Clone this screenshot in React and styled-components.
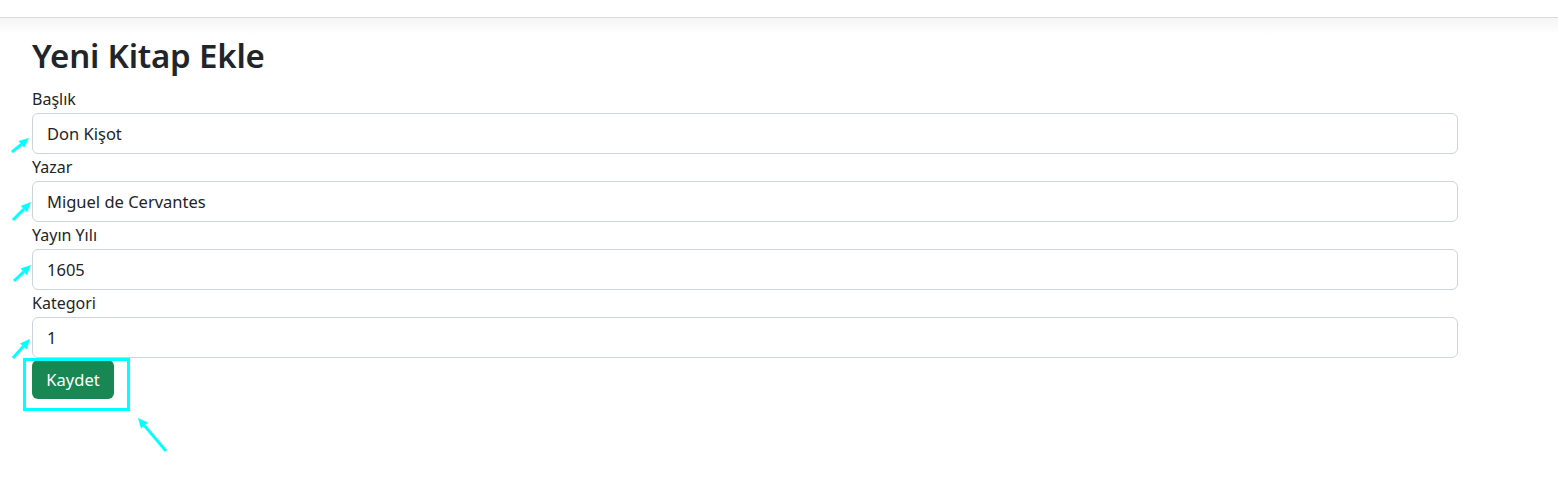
import React from "react";
import styled, { createGlobalStyle } from "styled-components";

const GlobalStyle = createGlobalStyle`
    body {
        margin: 0;
        background: #fff;
        color: #212529;
        font-family: "Noto Sans", "Open Sans", sans-serif;
    }
`;

const Page = styled.div`
    position: relative;
    width: 1558px;
    height: 495px;
    overflow: hidden;
`;

const TopBar = styled.div`
    height: 17px;
    border-bottom: 1px solid #dcdcdc;
    background: #fff;
`;

const Shade = styled.div`
    height: 16px;
    background: linear-gradient(#f5f5f5, #fff);
`;

const Main = styled.main`
    padding: 0 100px 0 32px;
`;

const Title = styled.h2`
    margin: 0 0 9px;
    padding-top: 1px;
    font-size: 33px;
    line-height: 42px;
    font-weight: 600;
    letter-spacing: -0.2px;
`;

const Form = styled.form`
    display: flex;
    flex-direction: column;
    align-items: flex-start;
`;

const Field = styled.div`
    width: 100%;
`;

const Label = styled.label`
    display: block;
    font-size: 16px;
    line-height: 27px;
`;

const Input = styled.input`
    box-sizing: border-box;
    display: block;
    width: 100%;
    height: 41px;
    padding: 0 14px;
    border: 1px solid #ced4da;
    border-radius: 6px;
    font-family: inherit;
    font-size: 16.5px;
    color: #212529;
    background: #fff;
    outline: none;
`;

const Button = styled.button`
    margin-top: 2px;
    width: 82px;
    height: 39px;
    border: none;
    border-radius: 6px;
    background: #198754;
    color: #fff;
    font-family: inherit;
    font-size: 16.5px;
`;

const Marks = styled.svg`
    position: absolute;
    left: 0;
    top: 0;
    pointer-events: none;
`;

const fields = [
    { label: "Başlık", value: "Don Kişot" },
    { label: "Yazar", value: "Miguel de Cervantes" },
    { label: "Yayın Yılı", value: "1605" },
    { label: "Kategori", value: "1" },
];

const arrows = [
    [12, 152, 29, 138],
    [13, 220, 31, 202],
    [14, 281, 31, 265],
    [13, 358, 30, 339],
    [166, 451, 138, 418],
];

const Arrow = ({ x1, y1, x2, y2 }) => {
    const a = Math.atan2(y2 - y1, x2 - x1);
    const len = 10;
    const w = 4.5;
    const bx = x2 - len * Math.cos(a);
    const by = y2 - len * Math.sin(a);
    const px = -Math.sin(a) * w;
    const py = Math.cos(a) * w;
    return (
        <g>
            <line x1={x1} y1={y1} x2={bx} y2={by} stroke="#00ffff" strokeWidth="3" />
            <polygon points={`${x2},${y2} ${bx + px},${by + py} ${bx - px},${by - py}`} fill="#00ffff" />
        </g>
    );
};

export default function App() {
    return (
        <Page>
            <GlobalStyle />
            <TopBar />
            <Shade />
            <Main>
                <Title>Yeni Kitap Ekle</Title>
                <Form onSubmit={e => e.preventDefault()}>
                    {fields.map(f => (
                        <Field key={f.label}>
                            <Label>{f.label}</Label>
                            <Input defaultValue={f.value} />
                        </Field>
                    ))}
                    <Button type="submit">Kaydet</Button>
                </Form>
            </Main>
            <Marks width="1558" height="495">
                <rect x="24.5" y="359.5" width="104" height="50" fill="none" stroke="#00ffff" strokeWidth="3" />
                {arrows.map(([x1, y1, x2, y2], i) => (
                    <Arrow key={i} x1={x1} y1={y1} x2={x2} y2={y2} />
                ))}
            </Marks>
        </Page>
    );
}
